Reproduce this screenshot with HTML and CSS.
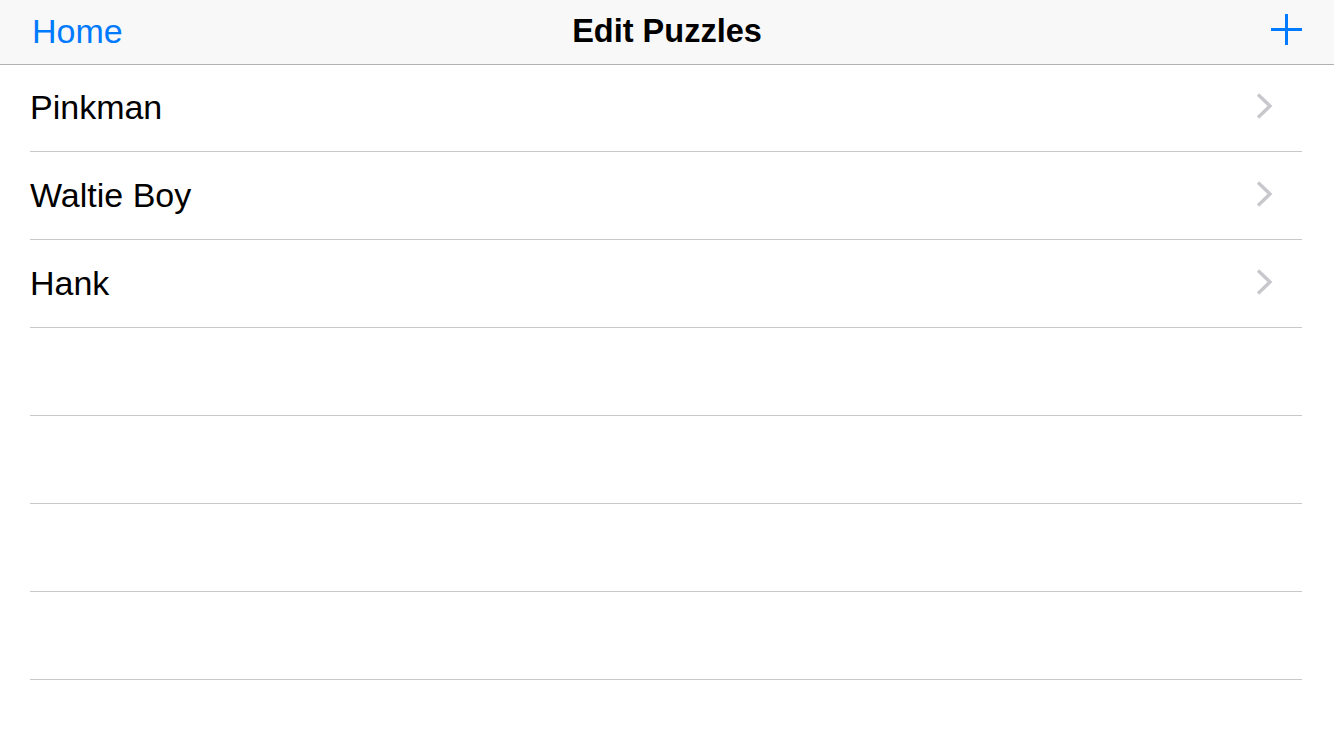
FILE: index.html
```html
<!DOCTYPE html>
<html>
<head>
<meta charset="utf-8">
<link rel="stylesheet" href="styles.css">
</head>
<body>
<div class="app">
  <header class="navbar">
    <a class="nav-back">Home</a>
    <h1 class="nav-title">Edit Puzzles</h1>
    <button class="nav-add" aria-label="Add">
      <svg width="31" height="31" viewBox="0 0 31 31"><path d="M15.5 0V31M0 15.5H31" stroke="#007aff" stroke-width="3" fill="none"/></svg>
    </button>
  </header>
  <ul class="list">
    <li class="row"><span class="row-label">Pinkman</span><svg class="chev" width="17" height="26" viewBox="0 0 17 26"><path d="M2 1.5L14 13L2 24.5" stroke="#c7c7cc" stroke-width="3.4" fill="none"/></svg></li>
    <li class="row"><span class="row-label">Waltie Boy</span><svg class="chev" width="17" height="26" viewBox="0 0 17 26"><path d="M2 1.5L14 13L2 24.5" stroke="#c7c7cc" stroke-width="3.4" fill="none"/></svg></li>
    <li class="row"><span class="row-label">Hank</span><svg class="chev" width="17" height="26" viewBox="0 0 17 26"><path d="M2 1.5L14 13L2 24.5" stroke="#c7c7cc" stroke-width="3.4" fill="none"/></svg></li>
    <li class="row"></li>
    <li class="row"></li>
    <li class="row"></li>
    <li class="row"></li>
  </ul>
</div>
</body>
</html>
```
FILE: styles.css
```css
html, body {
  margin: 0;
  padding: 0;
  background: #ffffff;
  font-family: "Liberation Sans", Arial, sans-serif;
}
.app {
  width: 1334px;
  height: 750px;
  overflow: hidden;
}
.navbar {
  height: 64px;
  background: #f8f8f8;
  border-bottom: 1px solid #b2b2b2;
  display: flex;
  align-items: center;
  justify-content: space-between;
  padding: 0 32px;
  position: relative;
}
.nav-back {
  color: #007aff;
  font-size: 34px;
  line-height: 40px;
  margin-top: -2px;
}
.nav-title {
  position: absolute;
  left: 0;
  right: 0;
  top: 0;
  margin: 0;
  text-align: center;
  font-size: 32.5px;
  font-weight: bold;
  line-height: 62px;
  color: #000;
  pointer-events: none;
}
.nav-add {
  border: 0;
  background: none;
  padding: 0;
  width: 31px;
  height: 31px;
  margin-top: -5px;
  display: flex;
}
.list {
  list-style: none;
  margin: -1px 32px 0 30px;
  padding: 0;
}
.row {
  height: 88px;
  box-sizing: border-box;
  border-bottom: 1px solid #c8c7cc;
  display: flex;
  align-items: center;
  justify-content: space-between;
  padding-right: 29px;
}
.row-label {
  font-size: 34px;
  color: #000;
  margin-top: -1px;
}
.chev {
  display: block;
  margin-top: -3px;
}
```
